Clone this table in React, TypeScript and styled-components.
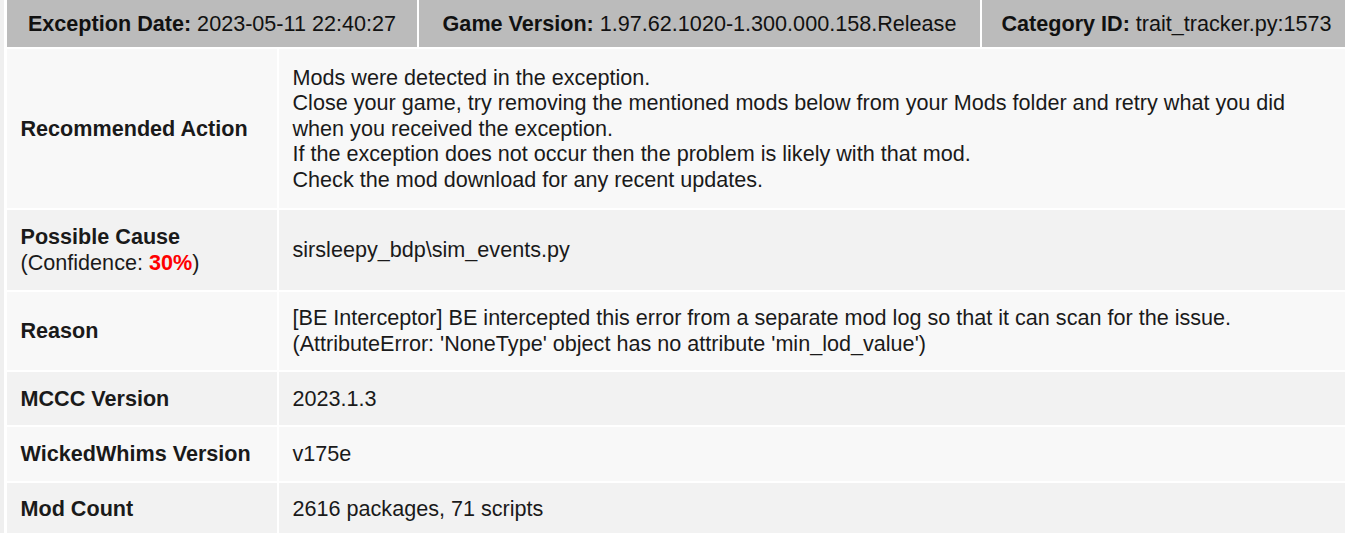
import React from "react";
import styled, { createGlobalStyle } from "styled-components";

const Global = createGlobalStyle`
  html, body {
    margin: 0;
    padding: 0;
    background: #ffffff;
    overflow: hidden;
  }
  body {
    font-family: "Liberation Sans", Arial, sans-serif;
    color: #222222;
  }
`;

const Page = styled.div`
  border-left: 4px solid #efefef;
  padding-left: 3px;
  width: 1338px;
  display: flex;
  flex-direction: column;
  gap: 2px;
`;

const HeaderBar = styled.div`
  display: grid;
  grid-template-columns: 410px 561px 369px;
  column-gap: 2px;
`;

const HeaderCell = styled.div`
  background: #bbbbbb;
  height: 47px;
  display: flex;
  align-items: center;
  justify-content: center;
  font-size: 21.6px;
  line-height: 25.6px;
  color: #111111;
  white-space: nowrap;
`;

const Key = styled.b`
  font-weight: 700;
`;

const Rows = styled.div`
  display: grid;
  grid-template-columns: 270px 1fr;
  gap: 2px;
`;

const Cell = styled.div<{ $shade: "light" | "dark"; $pad: number; $label?: boolean }>`
  background: ${(p) => (p.$shade === "light" ? "#f8f8f8" : "#f2f2f2")};
  padding: ${(p) => p.$pad}px 14px ${(p) => p.$pad}px 13.5px;
  font-size: 21.6px;
  line-height: 25.6px;
  font-weight: ${(p) => (p.$label ? 700 : 400)};
  display: flex;
  flex-direction: column;
  justify-content: center;
  color: #1a1a1a;
`;

const Sub = styled.span`
  font-weight: 400;
`;

const Percent = styled.b`
  color: #ff0000;
  font-weight: 700;
`;

type Row = {
  label: React.ReactNode;
  value: React.ReactNode;
  pad: number;
};

const rows: Row[] = [
  {
    label: "Recommended Action",
    pad: 15.5,
    value: (
      <>
        <div>Mods were detected in the exception.</div>
        <div>
          Close your game, try removing the mentioned mods below from your Mods folder and retry what you did
          when you received the exception.
        </div>
        <div>If the exception does not occur then the problem is likely with that mod.</div>
        <div>Check the mod download for any recent updates.</div>
      </>
    ),
  },
  {
    label: (
      <>
        <div>Possible Cause</div>
        <Sub>
          (Confidence: <Percent>30%</Percent>)
        </Sub>
      </>
    ),
    pad: 14.25,
    value: "sirsleepy_bdp\\sim_events.py",
  },
  {
    label: "Reason",
    pad: 13.75,
    value: (
      <>
        <div>[BE Interceptor] BE intercepted this error from a separate mod log so that it can scan for the issue.</div>
        <div>(AttributeError: 'NoneType' object has no attribute 'min_lod_value')</div>
      </>
    ),
  },
  { label: "MCCC Version", pad: 13.75, value: "2023.1.3" },
  { label: "WickedWhims Version", pad: 13.75, value: "v175e" },
  { label: "Mod Count", pad: 13.75, value: "2616 packages, 71 scripts" },
];

export default function App() {
  return (
    <>
      <Global />
      <Page>
        <HeaderBar>
          <HeaderCell>
            <Key>Exception Date:</Key>&nbsp;2023-05-11 22:40:27
          </HeaderCell>
          <HeaderCell>
            <Key>Game Version:</Key>&nbsp;1.97.62.1020-1.300.000.158.Release
          </HeaderCell>
          <HeaderCell>
            <Key>Category ID:</Key>&nbsp;trait_tracker.py:1573
          </HeaderCell>
        </HeaderBar>
        <Rows>
          {rows.map((r, i) => {
            const shade = i % 2 === 0 ? "light" : "dark";
            return (
              <React.Fragment key={i}>
                <Cell $shade={shade} $pad={r.pad} $label>
                  {r.label}
                </Cell>
                <Cell $shade={shade} $pad={r.pad}>
                  {r.value}
                </Cell>
              </React.Fragment>
            );
          })}
        </Rows>
      </Page>
    </>
  );
}
